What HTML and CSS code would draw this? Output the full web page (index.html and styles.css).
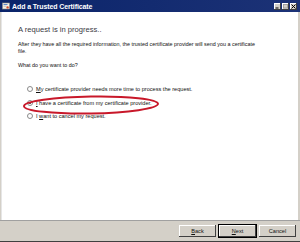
FILE: index.html
```html
<!DOCTYPE html>
<html lang="en">
<head>
    <meta charset="UTF-8">
    <title>Add a Trusted Certificate</title>
    <link rel="stylesheet" href="styles.css">
</head>
<body>
<div class="window">
    <!-- Title bar -->
    <div class="titlebar">
        <svg class="app-icon" width="8" height="8" viewBox="0 0 8 8">
            <rect x="0.5" y="1" width="7" height="6" fill="#f4f1e6" stroke="#8c8c8c" stroke-width="0.6"/>
            <rect x="1.5" y="2.2" width="4" height="0.8" fill="#3a6fc4"/>
            <rect x="1.5" y="3.8" width="3" height="0.6" fill="#9a9a9a"/>
            <circle cx="5.6" cy="5.4" r="1.2" fill="#d04a2a"/>
        </svg>
        <span class="title">Add a Trusted Certificate</span>
        <div class="caption-buttons">
            <span class="cap-btn"><svg width="7" height="7" viewBox="0 0 7 7"><rect x="1.5" y="4.5" width="3" height="1" fill="#000"/></svg></span>
            <span class="cap-btn"><svg width="7" height="7" viewBox="0 0 7 7"><rect x="1.5" y="1.5" width="4" height="3.5" fill="none" stroke="#9a9a9a" stroke-width="0.8"/></svg></span>
            <span class="cap-btn"><svg width="7" height="7" viewBox="0 0 7 7"><path d="M1.5 1.5 L5.5 5.5 M5.5 1.5 L1.5 5.5" stroke="#000" stroke-width="1"/></svg></span>
        </div>
    </div>

    <!-- Wizard page -->
    <div class="page">
        <h1 class="heading">A request is in progress..</h1>
        <p class="text">After they have all the required information, the trusted certificate provider will send you a certificate<br>file.</p>
        <p class="text question">What do you want to do?</p>

        <div class="options">
            <label class="option"><span class="radio"></span><span><u>M</u>y certificate provider needs more time to process the request.</span></label>
            <label class="option"><span class="radio checked"></span><span><u>I</u> have a certificate from my certificate provider.</span></label>
            <label class="option"><span class="radio"></span><span>I <u>w</u>ant to cancel my request.</span></label>
        </div>

        <!-- Red highlight drawn over the second option -->
        <svg class="marker" width="150" height="30" viewBox="0 0 150 30">
            <ellipse cx="70" cy="14" rx="67" ry="8.5" fill="none" stroke="#c8182a" stroke-width="2" transform="rotate(-1 70 14)"/>
        </svg>
    </div>

    <!-- Buttons -->
    <div class="footer">
        <button class="btn"><u>B</u>ack</button>
        <button class="btn default"><u>N</u>ext</button>
        <button class="btn">Cancel</button>
    </div>
</div>
</body>
</html>
```

FILE: styles.css
```css
/* General Reset */
body {
    margin: 0;
    padding: 0;
    font-family: "Liberation Sans", Arial, sans-serif;
    background: #ffffff;
}

.window {
    width: 300px;
    height: 242px;
    display: flex;
    flex-direction: column;
    box-sizing: border-box;
    background: #d4d0c8;
}

/* Title Bar */
.titlebar {
    height: 12px;
    background: linear-gradient(to right, #0a246a, #1c3276);
    display: flex;
    align-items: center;
    padding: 0 2px;
    gap: 2px;
    color: #ffffff;
}

.app-icon {
    flex: none;
}

.title {
    font-size: 7px;
    font-weight: bold;
    letter-spacing: -0.1px;
}

.caption-buttons {
    margin-left: auto;
    display: flex;
    gap: 1px;
    margin-right: 1px;
}

.cap-btn {
    width: 7px;
    height: 7px;
    background: #d4d0c8;
    box-shadow: inset -1px -1px #404040, inset 1px 1px #ffffff;
    display: flex;
}

/* Page */
.page {
    flex: 1;
    position: relative;
    background: #ffffff;
    margin: 0 2px 0 1px;
    border-left: 1px solid #e6e6e6;
    padding: 13px 20px 0 16px;
    color: #1a1a1a;
}

.heading {
    margin: 0;
    font-size: 7.6px;
    line-height: 10px;
    font-weight: normal;
    color: #3a3a44;
}

.text {
    margin: 6px 0 0;
    font-size: 5.4px;
    line-height: 7px;
    color: #111111;
}

.question {
    margin-top: 6.5px;
}

/* Options */
.options {
    margin-top: 14px;
    padding-left: 9px;
    display: flex;
    flex-direction: column;
}

.option {
    height: 13.5px;
    display: flex;
    align-items: center;
    gap: 3px;
    font-size: 5.6px;
    color: #111111;
}

.radio {
    width: 4px;
    height: 4px;
    border: 1px solid #8a8a8a;
    border-radius: 50%;
    background: #ffffff;
    position: relative;
}

.radio.checked::after {
    content: "";
    position: absolute;
    left: 1px;
    top: 1px;
    width: 2px;
    height: 2px;
    border-radius: 50%;
    background: #222222;
}

.marker {
    position: absolute;
    left: 19px;
    top: 79px;
}

/* Footer */
.footer {
    height: 22px;
    box-sizing: border-box;
    border-top: 1px solid #a0a0a0;
    border-bottom: 1px solid #404040;
    display: flex;
    justify-content: flex-end;
    align-items: center;
    gap: 3px;
    padding: 0 4px 1px 0;
}

.btn {
    width: 37px;
    height: 12px;
    padding: 0;
    font-family: inherit;
    font-size: 5.6px;
    color: #111111;
    background: #d4d0c8;
    border: none;
    box-shadow: inset -1px -1px #404040, inset 1px 1px #ffffff;
}

.btn.default {
    box-shadow: 0 0 0 1px #000000, inset -1px -1px #404040, inset 1px 1px #ffffff;
}
```
